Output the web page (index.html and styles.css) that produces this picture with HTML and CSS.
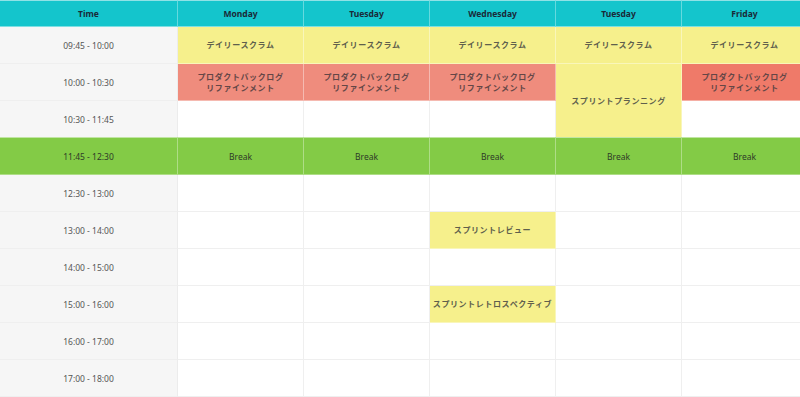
FILE: index.html
```html
<!DOCTYPE html>
<html lang="ja">
<head>
<meta charset="utf-8">
<link rel="stylesheet" href="styles.css">
</head>
<body>
<div class="table">
  <div class="cell head">Time</div>
  <div class="cell head">Monday</div>
  <div class="cell head">Tuesday</div>
  <div class="cell head">Wednesday</div>
  <div class="cell head">Tuesday</div>
  <div class="cell head">Friday</div>

  <div class="cell time">09:45 - 10:00</div>
  <div class="cell ev yellow">デイリースクラム</div>
  <div class="cell ev yellow">デイリースクラム</div>
  <div class="cell ev yellow">デイリースクラム</div>
  <div class="cell ev yellow">デイリースクラム</div>
  <div class="cell ev yellow">デイリースクラム</div>

  <div class="cell time">10:00 - 10:30</div>
  <div class="cell ev red">プロダクトバックログ<br>リファインメント</div>
  <div class="cell ev red">プロダクトバックログ<br>リファインメント</div>
  <div class="cell ev red">プロダクトバックログ<br>リファインメント</div>
  <div class="cell ev yellow span2">スプリントプランニング</div>
  <div class="cell ev red strong">プロダクトバックログ<br>リファインメント</div>

  <div class="cell time">10:30 - 11:45</div>
  <div class="cell"></div>
  <div class="cell"></div>
  <div class="cell"></div>
  <div class="cell"></div>

  <div class="cell brk">11:45 - 12:30</div>
  <div class="cell brk">Break</div>
  <div class="cell brk">Break</div>
  <div class="cell brk">Break</div>
  <div class="cell brk">Break</div>
  <div class="cell brk">Break</div>

  <div class="cell time">12:30 - 13:00</div>
  <div class="cell"></div><div class="cell"></div><div class="cell"></div><div class="cell"></div><div class="cell"></div>

  <div class="cell time">13:00 - 14:00</div>
  <div class="cell"></div><div class="cell"></div>
  <div class="cell ev yellow">スプリントレビュー</div>
  <div class="cell"></div><div class="cell"></div>

  <div class="cell time">14:00 - 15:00</div>
  <div class="cell"></div><div class="cell"></div><div class="cell"></div><div class="cell"></div><div class="cell"></div>

  <div class="cell time">15:00 - 16:00</div>
  <div class="cell"></div><div class="cell"></div>
  <div class="cell ev yellow">スプリントレトロスペクティブ</div>
  <div class="cell"></div><div class="cell"></div>

  <div class="cell time">16:00 - 17:00</div>
  <div class="cell"></div><div class="cell"></div><div class="cell"></div><div class="cell"></div><div class="cell"></div>

  <div class="cell time">17:00 - 18:00</div>
  <div class="cell"></div><div class="cell"></div><div class="cell"></div><div class="cell"></div><div class="cell"></div>
</div>
</body>
</html>
```

FILE: styles.css
```css
html, body {
  margin: 0;
  padding: 0;
  background: #ffffff;
  overflow: hidden;
}

body {
  width: 800px;
  height: 397px;
  font-family: "Noto Sans", "Noto Sans CJK JP", sans-serif;
  color: #444;
}

.table {
  display: grid;
  grid-template-columns: 178px repeat(5, 126px);
  grid-template-rows: 27px;
  grid-auto-rows: 37px;
  width: 808px;
}

.cell {
  box-sizing: border-box;
  border-right: 1px solid #efefef;
  border-bottom: 1px solid #efefef;
  display: flex;
  align-items: center;
  justify-content: center;
  text-align: center;
  font-size: 8.5px;
  background: #ffffff;
}

.head {
  background: #14c5cc;
  border-top: 1px solid #8fe2e6;
  border-right-color: rgba(255, 255, 255, 0.35);
  border-bottom-color: rgba(255, 255, 255, 0.45);
  color: #1a2a38;
  font-weight: 700;
  font-size: 8.5px;
}

.time {
  background: #f6f6f6;
  color: #555;
  font-size: 8.5px;
  border-right-color: #ececec;
}

.ev {
  font-family: "Noto Sans CJK JP", sans-serif;
  font-size: 8px;
  font-weight: 700;
  letter-spacing: 0.6px;
  line-height: 11.5px;
  color: #5a5a5a;
  border-right-color: rgba(255, 255, 255, 0.4);
  border-bottom-color: rgba(255, 255, 255, 0.4);
}

.yellow {
  background: #f6f08c;
  color: #605f4c;
}

.red {
  background: #ef8c7d;
  color: #644646;
}

.red.strong {
  background: #ef7a69;
}

.span2 {
  grid-row: span 2;
}

.brk {
  background: #83cb46;
  color: #2e3a28;
  font-size: 8.5px;
  border-right-color: rgba(255, 255, 255, 0.35);
  border-bottom-color: rgba(255, 255, 255, 0.35);
  border-top: 1px solid rgba(255, 255, 255, 0.5);
  margin-top: -1px;
}
```
